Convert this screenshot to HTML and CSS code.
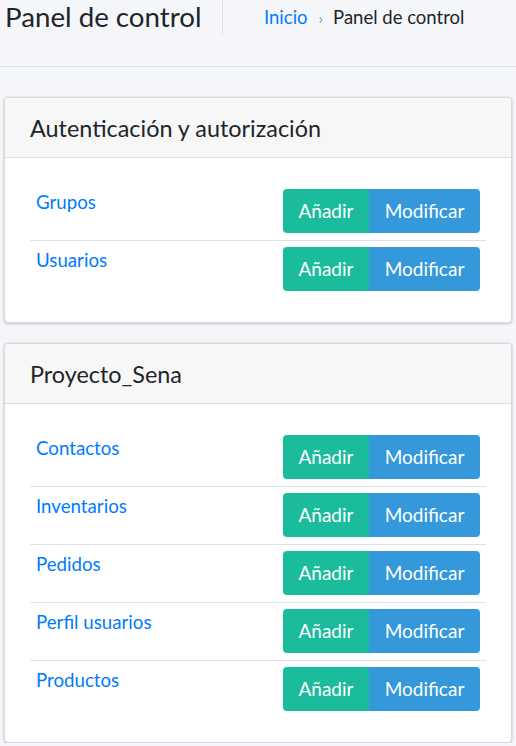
FILE: index.html
```html
<!DOCTYPE html>
<html lang="es">
<head>
<meta charset="utf-8">
<title>Panel de control</title>
<link rel="stylesheet" href="styles.css">
</head>
<body>
<header class="page-header">
  <h1 class="page-title">Panel de control</h1>
  <nav class="breadcrumb">
    <a href="#" class="crumb-link">Inicio</a>
    <span class="crumb-sep">›</span>
    <span class="crumb-current">Panel de control</span>
  </nav>
</header>
<main class="content">
  <section class="card">
    <div class="card-header"><h2 class="card-title">Autenticación y autorización</h2></div>
    <div class="card-body">
      <div class="model-row">
        <a href="#" class="model-link">Grupos</a>
        <div class="btn-group"><a href="#" class="btn btn-add">Añadir</a><a href="#" class="btn btn-edit">Modificar</a></div>
      </div>
      <div class="model-row">
        <a href="#" class="model-link">Usuarios</a>
        <div class="btn-group"><a href="#" class="btn btn-add">Añadir</a><a href="#" class="btn btn-edit">Modificar</a></div>
      </div>
    </div>
  </section>
  <section class="card">
    <div class="card-header"><h2 class="card-title">Proyecto_Sena</h2></div>
    <div class="card-body">
      <div class="model-row">
        <a href="#" class="model-link">Contactos</a>
        <div class="btn-group"><a href="#" class="btn btn-add">Añadir</a><a href="#" class="btn btn-edit">Modificar</a></div>
      </div>
      <div class="model-row">
        <a href="#" class="model-link">Inventarios</a>
        <div class="btn-group"><a href="#" class="btn btn-add">Añadir</a><a href="#" class="btn btn-edit">Modificar</a></div>
      </div>
      <div class="model-row">
        <a href="#" class="model-link">Pedidos</a>
        <div class="btn-group"><a href="#" class="btn btn-add">Añadir</a><a href="#" class="btn btn-edit">Modificar</a></div>
      </div>
      <div class="model-row">
        <a href="#" class="model-link">Perfil usuarios</a>
        <div class="btn-group"><a href="#" class="btn btn-add">Añadir</a><a href="#" class="btn btn-edit">Modificar</a></div>
      </div>
      <div class="model-row">
        <a href="#" class="model-link">Productos</a>
        <div class="btn-group"><a href="#" class="btn btn-add">Añadir</a><a href="#" class="btn btn-edit">Modificar</a></div>
      </div>
    </div>
  </section>
</main>
</body>
</html>
```
FILE: styles.css
```css
* { box-sizing: border-box; }
html, body {
  margin: 0;
  padding: 0;
  background: #f4f6f9;
  font-family: Lato, "Noto Sans", sans-serif;
  color: #212529;
}
a { text-decoration: none; }

.page-header {
  display: flex;
  align-items: flex-start;
  height: 67px;
  border-bottom: 1px solid #dee2e6;
}
.page-title {
  margin: 0;
  font-size: 27.7px;
  font-weight: 400;
  line-height: 34px;
  padding: 0 0 0 5px;
  border-right: 1px solid #dee2e6;
  height: 34px;
  width: 223px;
  white-space: nowrap;
}
.breadcrumb {
  display: flex;
  align-items: center;
  height: 34px;
  padding-left: 41px;
  font-size: 18.5px;
}
.crumb-link { color: #007bff; }
.crumb-sep {
  color: #8a939b;
  padding: 0 10px 0 11px;
  font-size: 16px;
}
.crumb-current { color: #212529; }

.content {
  padding: 30px 4px 0 4px;
  display: flex;
  flex-direction: column;
  gap: 20px;
}
.card {
  background: #fff;
  border: 1px solid #d9dcdf;
  border-radius: 4px;
  box-shadow: 0 0 2px rgba(0,0,0,0.12), 0 1px 3px rgba(0,0,0,0.15);
  overflow: hidden;
}
.card-header {
  background: #f7f7f7;
  border-bottom: 1px solid #dcdfe2;
  height: 60px;
  padding: 0 25px;
  display: flex;
  align-items: center;
}
.card-title {
  margin: 0;
  font-size: 23.4px;
  font-weight: 400;
  color: #212529;
}
.card-body {
  padding: 25px 25px 24px 25px;
}
.model-row {
  display: flex;
  justify-content: space-between;
  align-items: flex-start;
  padding: 6px 6px 7px 6px;
  border-top: 1px solid #dee2e6;
}
.model-row:first-child { border-top: 0; }
.model-link {
  color: #007bff;
  font-size: 18.7px;
  line-height: 22px;
  padding-top: 2px;
}
.btn-group {
  display: flex;
  border-radius: 4px;
  overflow: hidden;
}
.btn {
  display: block;
  height: 44px;
  line-height: 44px;
  font-size: 19px;
  color: #fff;
  text-align: center;
}
.btn-add { background: #1abc9c; width: 86px; }
.btn-edit { background: #3498db; width: 111px; }
```
